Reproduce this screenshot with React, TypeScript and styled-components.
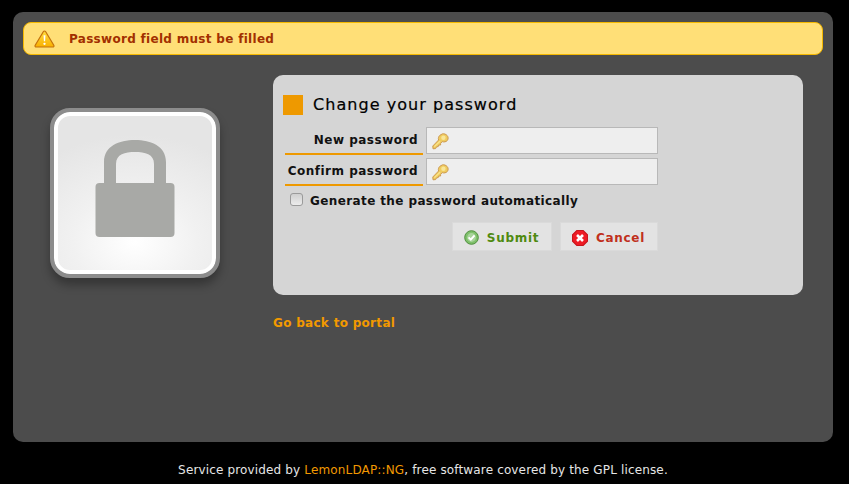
import styled, { createGlobalStyle } from "styled-components";

const GlobalStyle = createGlobalStyle`
  html, body {
    margin: 0;
    padding: 0;
    background: #000;
    font-family: "DejaVu Sans", Verdana, sans-serif;
    font-size: 12px;
    overflow: hidden;
  }
  * { box-sizing: border-box; }
`;

const Page = styled.div`
  width: 849px;
  height: 484px;
  padding: 12px 16px 0 13px;
`;

const Content = styled.div`
  height: 430px;
  background: #4c4c4c;
  border-radius: 10px;
  padding: 10px;
`;

const Message = styled.div`
  display: flex;
  align-items: center;
  height: 33px;
  padding-left: 10px;
  gap: 14px;
  background: #ffdf77;
  border: 1px solid #f5b800;
  border-radius: 8px;
  color: #a23000;
  font-weight: bold;
  font-size: 12px;
  letter-spacing: 0.3px;
`;

const Columns = styled.div`
  display: flex;
  margin-top: 20px;
`;

const LockColumn = styled.div`
  width: 250px;
  padding: 33px 0 0 27px;
  flex: none;
`;

const LockBox = styled.div`
  width: 170px;
  height: 170px;
  border: 4px solid #8c8c8c;
  border-radius: 20px;
  box-shadow: 0 7px 10px rgba(0, 0, 0, 0.3);
`;

const LockInner = styled.div`
  height: 100%;
  display: flex;
  justify-content: center;
  padding-top: 24px;
  border: 4px solid #fff;
  border-radius: 16px;
  background: radial-gradient(ellipse 90% 70% at 50% 82%, #fff 0%, #f1f1f1 45%, #e5e5e5 100%);
`;

const FormColumn = styled.div`
  width: 530px;
  flex: none;
`;

const Panel = styled.div`
  height: 220px;
  background: #d5d5d5;
  border-radius: 10px;
  padding: 20px 10px 0;
`;

const Title = styled.div`
  display: flex;
  align-items: center;
  gap: 10px;
  height: 20px;
  margin-bottom: 12px;
  padding-bottom: 2px;
  font-size: 16px;
  letter-spacing: 1.05px;
  -webkit-text-stroke: 0.2px #000;
  color: #000;
`;

const TitleMark = styled.span`
  width: 20px;
  height: 20px;
  margin-bottom: -2px;
  background: #ee9900;
`;

const Row = styled.div`
  display: flex;
  align-items: stretch;
  gap: 3px;
  margin-bottom: 3px;
  margin-left: 2px;
`;

const Label = styled.label`
  width: 138px;
  height: 28px;
  display: flex;
  align-items: center;
  justify-content: flex-end;
  padding: 0 5px 1px 0;
  border-bottom: 2px solid #ee9900;
  font-weight: bold;
  font-size: 12px;
  letter-spacing: 0.5px;
  white-space: nowrap;
  color: #111;
`;

const InputBox = styled.div`
  width: 232px;
  height: 27px;
  display: flex;
  align-items: center;
  padding: 2px 0 0 5px;
  background: #eeeeee;
  border: 1px solid #b8b8b8;
`;

const CheckRow = styled.label`
  display: flex;
  align-items: center;
  gap: 7px;
  margin: 7px 0 0 7px;
  height: 16px;
  font-weight: bold;
  font-size: 12px;
  letter-spacing: 0.39px;
  color: #111;
`;

const CheckBox = styled.span`
  width: 13px;
  height: 13px;
  margin-top: -4px;
  border: 1px solid #9a9a9a;
  border-radius: 3px;
  background: linear-gradient(#cfcfcf, #ececec);
`;

const Buttons = styled.div`
  display: flex;
  gap: 8px;
  margin: 13px 0 0 169px;
`;

const Button = styled.div<{ $color: string; $width: number }>`
  width: ${(p) => p.$width}px;
  height: 29px;
  display: flex;
  align-items: center;
  justify-content: center;
  gap: 8px;
  padding: 2px 1px 0 0;
  background: #e3e3e3;
  border: 1px solid #dadada;
  color: ${(p) => p.$color};
  font-weight: bold;
  font-size: 12px;
  letter-spacing: 0.7px;
`;

const BackLink = styled.a`
  display: block;
  margin-top: 21px;
  color: #f29900;
  font-weight: bold;
  font-size: 12px;
  letter-spacing: 0.3px;
  text-decoration: none;
`;

const Footer = styled.div`
  margin-top: 21px;
  text-align: center;
  color: #e6e6e6;
  font-size: 12px;
  letter-spacing: 0.15px;

  a {
    color: #f29900;
    text-decoration: none;
  }
`;

const WarningIcon = () => (
  <svg width="21" height="18" viewBox="0 0 21 19" preserveAspectRatio="none">
    <defs>
      <linearGradient id="warn" x1="0" y1="0" x2="0" y2="1">
        <stop offset="0" stopColor="#ffdc40" />
        <stop offset="1" stopColor="#f9b000" />
      </linearGradient>
    </defs>
    <path
      d="M10.5 1 C11 1 11.4 1.3 11.7 1.8 L19.8 16 C20.3 17 19.8 18 18.7 18 L2.3 18 C1.2 18 0.7 17 1.2 16 L9.3 1.8 C9.6 1.3 10 1 10.5 1 Z"
      fill="url(#warn)"
      stroke="#c4720c"
      strokeWidth="1.2"
    />
    <path d="M9.5 5.5 h2 l-0.4 6.5 h-1.2 Z" fill="#fff" />
    <circle cx="10.5" cy="14.6" r="1.2" fill="#fff" />
  </svg>
);

const LockIcon = () => (
  <svg width="80" height="97" viewBox="0 0 80 97">
    <path
      d="M9 46 V22 C9 6 24 0 40 0 C56 0 71 6 71 22 V46 H59 V24 C59 14 50 12 40 12 C30 12 21 14 21 24 V46 Z"
      fill="#a8a9a6"
    />
    <rect x="0.5" y="43" width="79" height="54" rx="4" fill="#a8a9a6" />
  </svg>
);

const KeyIcon = () => (
  <svg width="17" height="17" viewBox="0 0 17 17">
    <path
      d="M10.5 0.8 C12.2 0.6 14 1.2 15.2 2.6 C16.4 4 16.4 6 15.4 7.4 C14.2 8.8 12 9.4 10.2 8.6 L8.6 10.4 L8.6 12 L6.8 12 L6.2 13.6 L4.6 13.8 L3.6 15.6 L1 15.8 L0.8 13 L6.6 7 C6 5 6.6 3.4 8 2.2 Z"
      fill="#efcb5e"
      stroke="#cd9a52"
      strokeWidth="1"
      strokeLinejoin="round"
    />
    <path d="M2.4 13.6 L8 8.2" stroke="#f9e48f" strokeWidth="1.2" />
    <circle cx="11.4" cy="4.8" r="2.2" fill="#f8e69a" />
  </svg>
);

const CheckIcon = () => (
  <svg width="15" height="15" viewBox="0 0 15 15">
    <circle cx="7.5" cy="7.5" r="6.8" fill="#7ec06a" stroke="#4f8f3e" strokeWidth="1" />
    <circle cx="7.5" cy="7.5" r="4.4" fill="#a9d49c" />
    <path d="M4.6 7.4 L6.8 9.6 L10.6 5.4" fill="none" stroke="#fff" strokeWidth="2" />
  </svg>
);

const CrossIcon = () => (
  <svg width="16" height="16" viewBox="0 0 15 15">
    <path
      d="M4.5 0.5 H10.5 L14.5 4.5 V10.5 L10.5 14.5 H4.5 L0.5 10.5 V4.5 Z"
      fill="#ee1c25"
      stroke="#c9151c"
      strokeWidth="1"
    />
    <path d="M4.7 4.7 L10.3 10.3 M10.3 4.7 L4.7 10.3" stroke="#fff" strokeWidth="2.4" />
  </svg>
);

const App = () => {
  return (
    <Page>
      <GlobalStyle />
      <Content>
        <Message>
          <WarningIcon />
          <span>Password field must be filled</span>
        </Message>
        <Columns>
          <LockColumn>
            <LockBox>
              <LockInner>
                <LockIcon />
              </LockInner>
            </LockBox>
          </LockColumn>
          <FormColumn>
            <Panel>
              <Title>
                <TitleMark />
                Change your password
              </Title>
              <Row>
                <Label>New password</Label>
                <InputBox>
                  <KeyIcon />
                </InputBox>
              </Row>
              <Row>
                <Label>Confirm password</Label>
                <InputBox>
                  <KeyIcon />
                </InputBox>
              </Row>
              <CheckRow>
                <CheckBox />
                Generate the password automatically
              </CheckRow>
              <Buttons>
                <Button $color="#4f8a10" $width={100}>
                  <CheckIcon />
                  Submit
                </Button>
                <Button $color="#c0301c" $width={98}>
                  <CrossIcon />
                  Cancel
                </Button>
              </Buttons>
            </Panel>
            <BackLink href="#">Go back to portal</BackLink>
          </FormColumn>
        </Columns>
      </Content>
      <Footer>
        Service provided by <a href="#">LemonLDAP::NG</a>, free software covered by the GPL license.
      </Footer>
    </Page>
  );
};

export default App;
